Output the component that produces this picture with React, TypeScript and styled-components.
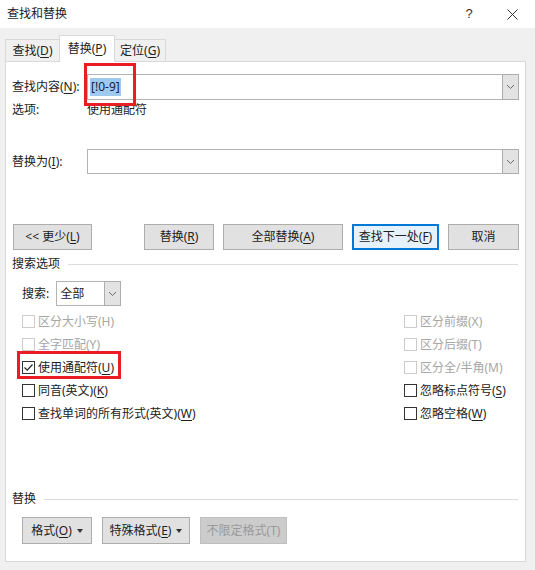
import React from "react";
import styled, { createGlobalStyle, css } from "styled-components";

const Global = createGlobalStyle`
  html, body { margin: 0; padding: 0; background: #f0f0f0; }
  body { font-family: "Noto Sans", "Noto Sans CJK SC", sans-serif; font-size: 12px; color: #222; }
  * { box-sizing: border-box; }
  u { text-decoration-thickness: 1px; text-underline-offset: 2px; }
`;

const Window = styled.div`
  width: 535px;
  height: 570px;
  display: flex;
  flex-direction: column;
  background: #f0f0f0;
  position: relative;
  overflow: hidden;
`;

const TitleBar = styled.div`
  height: 28px;
  background: #fff;
  display: flex;
  align-items: center;
  padding-left: 7px;
  line-height: 16px;
`;

const TitleText = styled.div`
  flex: 1;
  font-size: 12px;
  color: #1a1a1a;
`;

const TitleBtn = styled.div<{ $w: number }>`
  width: ${(p) => p.$w}px;
  height: 28px;
  display: flex;
  align-items: center;
  justify-content: center;
  color: #333;
  font-family: "Liberation Sans", sans-serif;
  font-size: 13px;
`;

const Body = styled.div`
  flex: 1;
  display: flex;
  flex-direction: column;
  padding: 8px 9px 8px 5px;
`;

const TabStrip = styled.div`
  display: flex;
  align-items: flex-end;
  height: 26px;
  position: relative;
  z-index: 1;
  margin-bottom: -1px;
`;

const Tab = styled.div<{ $w: number; $active?: boolean }>`
  width: ${(p) => p.$w}px;
  height: ${(p) => (p.$active ? 27 : 23)}px;
  display: flex;
  align-items: center;
  justify-content: center;
  padding-top: ${(p) => (p.$active ? 0 : 1)}px;
  border: 1px solid #d9d9d9;
  border-bottom: ${(p) => (p.$active ? "none" : "1px solid #d9d9d9")};
  background: ${(p) => (p.$active ? "#fff" : "#f0f0f0")};
  margin-left: ${(p) => (p.$active ? "-1px" : "0")};
  margin-right: ${(p) => (p.$active ? "-1px" : "0")};
  position: relative;
  z-index: ${(p) => (p.$active ? 2 : 1)};
  color: #222;
  line-height: 16px;
`;

const Panel = styled.div`
  flex: 1;
  background: #fff;
  border: 1px solid #d9d9d9;
  display: flex;
  flex-direction: column;
  padding: 0 6px 0 6px;
  position: relative;
`;

const FieldRow = styled.div<{ $mt: number }>`
  display: flex;
  align-items: center;
  margin-top: ${(p) => p.$mt}px;
`;

const Label = styled.div`
  width: 75px;
  line-height: 16px;
  white-space: nowrap;
`;

const Combo = styled.div<{ $h: number }>`
  flex: 1;
  height: ${(p) => p.$h}px;
  border: 1px solid #b4b4b4;
  display: flex;
  align-items: center;
  background: #fff;
`;

const ComboText = styled.div<{ $pl?: number }>`
  flex: 1;
  padding-left: ${(p) => p.$pl ?? 2}px;
  display: flex;
  align-items: center;
`;

const Selected = styled.span`
  background: #9fcaf0;
  color: #10243c;
  line-height: 18px;
  padding: 0 1px;
  font-size: 12px;
`;

const DropBtn = styled.div`
  width: 17px;
  align-self: stretch;
  margin: -1px -1px -1px 0;
  background: #e3e3e3;
  border: 1px solid #adadad;
  display: flex;
  align-items: center;
  justify-content: center;
`;

const InfoRow = styled.div`
  display: flex;
  margin-top: 2px;
  line-height: 16px;
`;

const ButtonRow = styled.div`
  display: flex;
  margin-top: 50px;
  padding-left: 1px;
`;

const ButtonGroup = styled.div`
  margin-left: auto;
  display: flex;
  gap: 9px;
`;

const Button = styled.div<{ $w: number; $h?: number; $default?: boolean; $disabled?: boolean }>`
  width: ${(p) => p.$w}px;
  height: ${(p) => p.$h ?? 26}px;
  display: flex;
  align-items: center;
  justify-content: center;
  gap: 5px;
  background: #e1e1e1;
  border: 1px solid #adadad;
  line-height: 16px;
  white-space: nowrap;
  color: #222;
  ${(p) =>
    p.$default &&
    css`
      border-color: #0078d7;
      box-shadow: inset 0 0 0 1px #0078d7;
      background: #e5f1fb;
    `}
  ${(p) =>
    p.$disabled &&
    css`
      background: #cccccc;
      border-color: #bfbfbf;
      color: #9a9a9a;
    `}
`;

const BtnText = styled.span`
  white-space: nowrap;
`;

const SectionHeader = styled.div<{ $mt: number }>`
  display: flex;
  align-items: center;
  gap: 8px;
  margin-top: ${(p) => p.$mt}px;
  line-height: 16px;
  &::after {
    content: "";
    flex: 1;
    height: 1px;
    background: #dcdcdc;
    margin-right: 1px;
  }
`;

const SearchRow = styled.div`
  display: flex;
  align-items: center;
  margin-top: 9px;
  padding-left: 10px;
  gap: 7px;
  line-height: 16px;
`;

const SmallCombo = styled.div`
  width: 65px;
  height: 25px;
  border: 1px solid #b4b4b4;
  display: flex;
  align-items: center;
`;

const CheckGrid = styled.div`
  display: grid;
  grid-template-columns: 382px 1fr;
  grid-auto-rows: 23px;
  margin-top: 4px;
  padding-left: 10px;
`;

const CheckItem = styled.div<{ $disabled?: boolean }>`
  display: flex;
  align-items: center;
  gap: 3px;
  line-height: 16px;
  color: ${(p) => (p.$disabled ? "#a6a6a6" : "#222")};
  white-space: nowrap;
`;

const Box = styled.div<{ $disabled?: boolean }>`
  width: 13px;
  height: 13px;
  border: 1px solid ${(p) => (p.$disabled ? "#cccccc" : "#333")};
  background: #fff;
  display: flex;
  align-items: center;
  justify-content: center;
`;

const FormatRow = styled.div`
  display: flex;
  margin-top: 10px;
  padding-left: 10px;
  gap: 10px;
`;

const Caret = styled.span`
  width: 0;
  height: 0;
  border-left: 3px solid transparent;
  border-right: 3px solid transparent;
  border-top: 4px solid #333;
`;

const Annotation = styled.div<{ $x: number; $y: number; $w: number; $h: number }>`
  position: absolute;
  left: ${(p) => p.$x}px;
  top: ${(p) => p.$y}px;
  width: ${(p) => p.$w}px;
  height: ${(p) => p.$h}px;
  border: 3px solid #ea1c24;
  pointer-events: none;
  z-index: 5;
`;

const Chevron = () => (
  <svg width="9" height="6" viewBox="0 0 9 6">
    <polyline points="1,1 4.5,4.5 8,1" fill="none" stroke="#6a6a6a" strokeWidth="1" />
  </svg>
);

const Check: React.FC<{ checked?: boolean; disabled?: boolean }> = ({ checked, disabled }) => (
  <Box $disabled={disabled}>
    {checked && (
      <svg width="11" height="11" viewBox="0 0 11 11">
        <polyline points="1.5,5.5 4.2,8.2 9.5,2.5" fill="none" stroke="#222" strokeWidth="1.2" />
      </svg>
    )}
  </Box>
);

type Opt = { text: React.ReactNode; disabled?: boolean; checked?: boolean };

const leftOpts: Opt[] = [
  { text: "区分大小写(H)", disabled: true },
  { text: "全字匹配(Y)", disabled: true },
  { text: <>使用通配符(<u>U</u>)</>, checked: true },
  { text: <>同音(英文)(<u>K</u>)</> },
  { text: <>查找单词的所有形式(英文)(<u>W</u>)</> },
];

const rightOpts: Opt[] = [
  { text: "区分前缀(X)", disabled: true },
  { text: "区分后缀(T)", disabled: true },
  { text: "区分全/半角(M)", disabled: true },
  { text: <>忽略标点符号(<u>S</u>)</> },
  { text: <>忽略空格(<u>W</u>)</> },
];

export default function App() {
  const rows: Opt[] = [];
  leftOpts.forEach((o, i) => {
    rows.push(o);
    rows.push(rightOpts[i]);
  });
  return (
    <Window>
      <Global />
      <TitleBar>
        <TitleText>查找和替换</TitleText>
        <TitleBtn $w={40}>?</TitleBtn>
        <TitleBtn $w={46}>
          <svg width="11" height="11" viewBox="0 0 11 11">
            <path d="M0.5 0.5 L10.5 10.5 M10.5 0.5 L0.5 10.5" stroke="#333" strokeWidth="1" />
          </svg>
        </TitleBtn>
      </TitleBar>
      <Body>
        <TabStrip>
          <Tab $w={55}>
            <BtnText>
              查找(<u>D</u>)
            </BtnText>
          </Tab>
          <Tab $w={56} $active>
            <BtnText>
              替换(<u>P</u>)
            </BtnText>
          </Tab>
          <Tab $w={52}>
            <BtnText>
              定位(<u>G</u>)
            </BtnText>
          </Tab>
        </TabStrip>
        <Panel>
          <FieldRow $mt={12}>
            <Label>
              查找内容(<u>N</u>):
            </Label>
            <Combo $h={26}>
              <ComboText>
                <Selected>[!0-9]</Selected>
              </ComboText>
              <DropBtn>
                <Chevron />
              </DropBtn>
            </Combo>
          </FieldRow>
          <InfoRow>
            <Label>选项:</Label>
            <div>使用通配符</div>
          </InfoRow>
          <FieldRow $mt={31}>
            <Label>
              替换为(<u>I</u>):
            </Label>
            <Combo $h={25}>
              <ComboText />
              <DropBtn>
                <Chevron />
              </DropBtn>
            </Combo>
          </FieldRow>
          <ButtonRow>
            <Button $w={79}>
              <BtnText>
                &lt;&lt; 更少(<u>L</u>)
              </BtnText>
            </Button>
            <ButtonGroup>
              <Button $w={70}>
                <BtnText>
                  替换(<u>R</u>)
                </BtnText>
              </Button>
              <Button $w={120}>
                <BtnText>
                  全部替换(<u>A</u>)
                </BtnText>
              </Button>
              <Button $w={87} $default>
                <BtnText>
                  查找下一处(<u>F</u>)
                </BtnText>
              </Button>
              <Button $w={71}>
                <BtnText>取消</BtnText>
              </Button>
            </ButtonGroup>
          </ButtonRow>
          <SectionHeader $mt={6}>搜索选项</SectionHeader>
          <SearchRow>
            <span>搜索:</span>
            <SmallCombo>
              <ComboText $pl={3}>全部</ComboText>
              <DropBtn>
                <Chevron />
              </DropBtn>
            </SmallCombo>
          </SearchRow>
          <CheckGrid>
            {rows.map((o, i) => (
              <CheckItem key={i} $disabled={o.disabled}>
                <Check checked={o.checked} disabled={o.disabled} />
                <span>{o.text}</span>
              </CheckItem>
            ))}
          </CheckGrid>
          <SectionHeader $mt={66}>替换</SectionHeader>
          <FormatRow>
            <Button $w={70} $h={27}>
              <BtnText>
                格式(<u>O</u>)
              </BtnText>
              <Caret />
            </Button>
            <Button $w={88} $h={27}>
              <BtnText>
                特殊格式(<u>E</u>)
              </BtnText>
              <Caret />
            </Button>
            <Button $w={87} $h={27} $disabled>
              <BtnText>不限定格式(T)</BtnText>
            </Button>
          </FormatRow>
        </Panel>
      </Body>
      <Annotation $x={84} $y={63} $w={52} $h={43} />
      <Annotation $x={17} $y={351} $w={104} $h={28} />
    </Window>
  );
}
